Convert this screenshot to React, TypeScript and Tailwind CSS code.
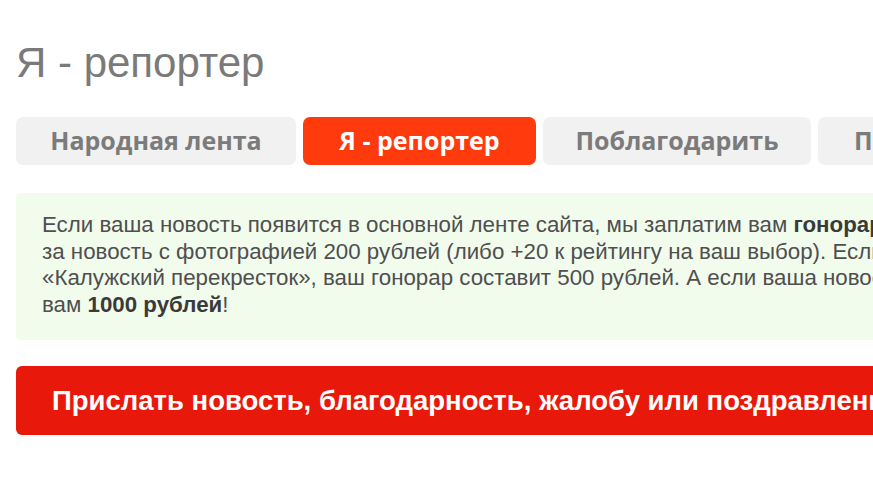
import React from 'react';

const tabs = [
  { label: 'Народная лента', width: 'w-[280px]', active: false },
  { label: 'Я - репортер', width: 'w-[233px]', active: true },
  { label: 'Поблагодарить', width: 'w-[268px]', active: false },
  { label: 'Поздравить', width: 'px-[36px]', active: false },
];

const App: React.FC = () => {
  return (
    <div className="w-[873px] h-[484px] overflow-hidden bg-white">
      <div className="pl-[16px] pt-[39px] w-[1300px]">
        {/* Title */}
        <h1 className="text-[42px] leading-[48px] text-[#7a7a7a] font-['Liberation_Sans',Arial,sans-serif]">
          Я - репортер
        </h1>

        {/* Tabs */}
        <div className="mt-[30px] flex gap-[7px]">
          {tabs.map((tab) => (
            <div
              key={tab.label}
              className={`${tab.width} h-[48px] shrink-0 flex items-center justify-center rounded-[7px] text-[25px] font-bold font-['Open_Sans',sans-serif] ${
                tab.active ? 'bg-[#ff3a0d] text-white' : 'bg-[#f1f1f1] text-[#7b7b7b]'
              }`}
            >
              {tab.label}
            </div>
          ))}
        </div>

        {/* Info box */}
        <div className="mt-[28px] h-[147px] rounded-[4px] bg-[#f2fced] pl-[26px] pt-[19px] text-[22.3px] leading-[26.5px] text-[#4f4f4f] whitespace-nowrap font-['Liberation_Sans',Arial,sans-serif]">
          <div>
            Если ваша новость появится в основной ленте сайта, мы заплатим вам <b className="text-[#3a3a3a]">гонорар 100 рублей</b>,
          </div>
          <div>за новость с фотографией 200 рублей (либо +20 к рейтингу на ваш выбор). Если новость попадет в газету</div>
          <div>«Калужский перекресток», ваш гонорар составит 500 рублей. А если ваша новость станет лучшей за неделю, мы заплатим</div>
          <div>
            вам <b className="text-[#3a3a3a]">1000 рублей</b>!
          </div>
        </div>

        {/* Send button */}
        <div className="mt-[26px] h-[69px] rounded-[6px] bg-[#e8190a] flex items-center pl-[36px] whitespace-nowrap text-white text-[27.5px] font-bold font-['Liberation_Sans',Arial,sans-serif]">
          Прислать новость, благодарность, жалобу или поздравление
        </div>
      </div>
    </div>
  );
};

export default App;
